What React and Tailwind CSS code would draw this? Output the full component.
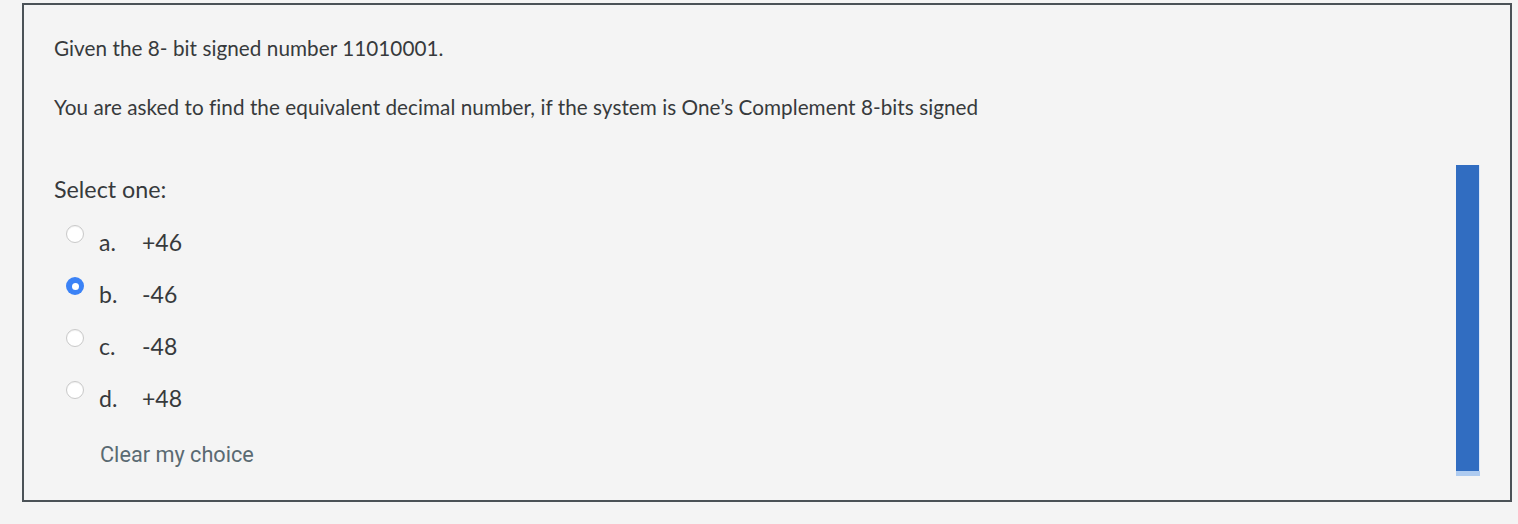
export default function App() {
  const opts = [
    { l: "a.", v: "+46", c: false },
    { l: "b.", v: "-46", c: true },
    { l: "c.", v: "-48", c: false },
    { l: "d.", v: "+48", c: false },
  ];
  return (
    <div className="w-[1518px] h-[524px] bg-[#f4f4f4] pt-[3px] pl-[22px]" style={{ fontFamily: "Lato, 'Open Sans', sans-serif" }}>
      <div className="relative w-[1490px] h-[499px] border-2 border-[#4b5257] bg-[#f4f4f4] pl-[30px] pt-[30px] text-[#373a3c]">
        <p className="text-[20.7px] leading-[26px] tracking-[0.05px]">Given the 8- bit signed number 11010001.</p>
        <p className="text-[20.7px] leading-[26px] mt-[33px] tracking-[0.05px]">You are asked to find the equivalent decimal number, if the system is One’s Complement 8-bits signed</p>
        <p className="text-[23.3px] leading-[30px] mt-[54px]">Select one:</p>
        <div className="mt-[19px] flex flex-col">
          {opts.map((o) => (
            <div key={o.l} className="flex items-start h-[52px]">
              <span className="ml-[12px] mt-[2px] w-[18px] h-[18px] rounded-full flex items-center justify-center">
                {o.c ? (
                  <span className="w-[18px] h-[18px] rounded-full bg-[#3b82f6] flex items-center justify-center">
                    <span className="w-[7px] h-[7px] rounded-full bg-white" />
                  </span>
                ) : (
                  <span className="w-[18px] h-[18px] rounded-full bg-white border border-[#c9c9c9] shadow-[inset_0_1px_1px_rgba(0,0,0,0.06)]" />
                )}
              </span>
              <span className="ml-[15px] mt-[4px] text-[23px] leading-[30px] w-[43px]">{o.l}</span>
              <span className="text-[23px] mt-[4px] leading-[30px]">{o.v}</span>
            </div>
          ))}
        </div>
        <p className="ml-[46px] mt-[9px] text-[21.7px] leading-[30px] text-[#5a6a72]" style={{ fontFamily: "Roboto, sans-serif" }}>Clear my choice</p>
        <div className="absolute left-[1432px] top-[160px] w-[24px] h-[311px] flex flex-col">
          <div className="flex-1 bg-[#316dc1] border-r border-[#dce8f8]" />
          <div className="h-[5px] bg-[#aecbf0]" />
        </div>
      </div>
    </div>
  );
}
